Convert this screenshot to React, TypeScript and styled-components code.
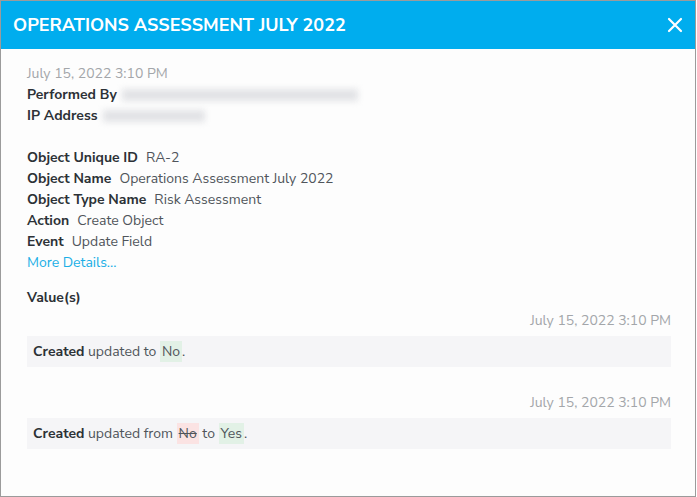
import React from 'react';
import styled, { createGlobalStyle } from 'styled-components';

type Field = {
  label: string;
  value: string;
};

type Change = {
  date: string;
  from?: string;
  to: string;
};

const fields: Field[] = [
  { label: 'Object Unique ID', value: 'RA-2' },
  { label: 'Object Name', value: 'Operations Assessment July 2022' },
  { label: 'Object Type Name', value: 'Risk Assessment' },
  { label: 'Action', value: 'Create Object' },
  { label: 'Event', value: 'Update Field' }
];

const changes: Change[] = [
  { date: 'July 15, 2022 3:10 PM', to: 'No' },
  { date: 'July 15, 2022 3:10 PM', from: 'No', to: 'Yes' }
];

function App() {
  return (
    <>
      <GlobalStyle />
      <Modal>
        <Header>
          <Title>OPERATIONS ASSESSMENT JULY 2022</Title>
          <Close aria-label="Close">
            <svg width="16" height="16" viewBox="0 0 16 16">
              <path d="M2 2 L14 14 M14 2 L2 14" stroke="#fff" strokeWidth="2.2" strokeLinecap="round" />
            </svg>
          </Close>
        </Header>

        <Body>
          <Timestamp>July 15, 2022 3:10 PM</Timestamp>
          <Line>
            <Label>Performed By</Label>
            <Redacted $width={236} />
          </Line>
          <Line>
            <Label>IP Address</Label>
            <Redacted $width={102} />
          </Line>

          <Group>
            {fields.map((f) => (
              <Line key={f.label}>
                <Label>{f.label}</Label>
                <Value>{f.value}</Value>
              </Line>
            ))}
            <Link href="#">More Details...</Link>
          </Group>

          <SectionTitle>Value(s)</SectionTitle>

          {changes.map((c, i) => (
            <Entry key={i}>
              <EntryDate>{c.date}</EntryDate>
              <EntryBox>
                <strong>Created</strong> updated {c.from ? 'from ' : 'to '}
                {c.from && (
                  <>
                    <Removed>{c.from}</Removed> to{' '}
                  </>
                )}
                <Added>{c.to}</Added>.
              </EntryBox>
            </Entry>
          ))}
        </Body>
      </Modal>
    </>
  );
}

const GlobalStyle = createGlobalStyle`
  body {
    margin: 0;
    background: #ffffff;
    font-family: "Nunito Sans", Lato, "Open Sans", sans-serif;
  }
`;

const Modal = styled.div`
  box-sizing: border-box;
  width: 696px;
  height: 497px;
  border: 1px solid #9b9b9b;
  background: #fdfdfd;
  display: flex;
  flex-direction: column;
`;

const Header = styled.header`
  height: 48px;
  flex-shrink: 0;
  background: #00adee;
  display: flex;
  align-items: center;
  justify-content: space-between;
  padding: 0 12px 0 12px;
`;

const Title = styled.h1`
  margin: 0;
  color: #ffffff;
  font-size: 18px;
  font-weight: 700;
`;

const Close = styled.button`
  background: none;
  border: none;
  padding: 0;
  display: flex;
  cursor: pointer;
`;

const Body = styled.div`
  padding: 14px 24px 0 26px;
  font-size: 14px;
  line-height: 21px;
  color: #50555b;
`;

const Timestamp = styled.div`
  color: #a3a6aa;
`;

const Line = styled.div`
  display: flex;
  align-items: center;
  gap: 8px;
`;

const Label = styled.span`
  font-weight: 700;
  color: #2c3136;
`;

const Value = styled.span`
  color: #50555b;
`;

const Redacted = styled.span<{ $width: number }>`
  display: inline-block;
  width: ${(p) => p.$width}px;
  height: 12px;
  margin-left: -3px;
  background: #e2e3e6;
  filter: blur(3px);
`;

const Group = styled.div`
  margin-top: 21px;
`;

const Link = styled.a`
  display: block;
  color: #1aafe6;
  text-decoration: none;
`;

const SectionTitle = styled.div`
  margin-top: 14px;
  font-weight: 700;
  color: #2c3136;
`;

const Entry = styled.div`
  & + & {
    margin-top: 25px;
  }
`;

const EntryDate = styled.div`
  margin-top: 2px;
  margin-bottom: 5px;
  text-align: right;
  color: #a3a6aa;
`;

const EntryBox = styled.div`
  background: #f5f5f7;
  padding: 5px 6px;
  color: #50555b;

  strong {
    font-weight: 700;
    color: #2c3136;
  }
`;

const Added = styled.span`
  display: inline-block;
  background: #e2f1e6;
  padding: 0 2px;
`;

const Removed = styled.span`
  display: inline-block;
  background: #fbe3e3;
  padding: 0 2px;
  text-decoration: line-through;
`;

export default App;
